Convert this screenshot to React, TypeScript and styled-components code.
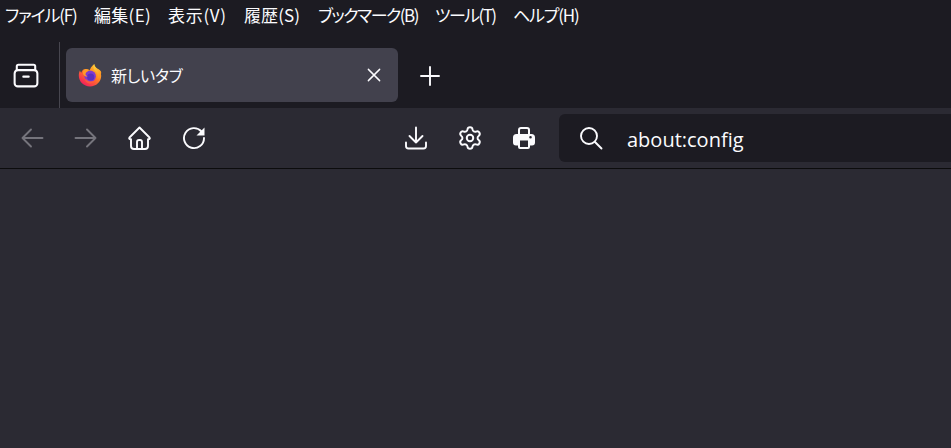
import React from 'react';
import styled, { createGlobalStyle } from 'styled-components';
import { Settings } from 'lucide-react';

const GlobalStyle = createGlobalStyle`
  html, body {
    margin: 0;
    height: 100%;
    background: #2b2a33;
  }
  #root {
    height: 100%;
  }
`;

const Window = styled.div`
  width: 951px;
  height: 448px;
  overflow: hidden;
  display: flex;
  flex-direction: column;
  background: #2b2a33;
  color: #fbfbfe;
  font-family: "Noto Sans CJK JP", "Noto Sans", sans-serif;
`;

const MenuBar = styled.div`
  height: 32px;
  flex: none;
  display: flex;
  align-items: center;
  box-sizing: border-box;
  background: #1c1b22;
  padding: 0 0 2px 5px;
  gap: 18px;
`;

const MenuItem = styled.span<{ $width: number; $spacing: number }>`
  width: ${({ $width }) => $width}px;
  flex: none;
  font-size: 17px;
  line-height: 30px;
  font-feature-settings: "palt";
  letter-spacing: ${({ $spacing }) => $spacing}px;
  white-space: nowrap;
  color: #fbfbfe;
`;

const TabBar = styled.div`
  height: 76px;
  flex: none;
  display: flex;
  align-items: center;
  background: #1c1b22;
`;

const TabSlot = styled.div`
  width: 60px;
  height: 66px;
  margin-top: 10px;
  flex: none;
  display: flex;
  align-items: center;
  padding-left: 13px;
  box-sizing: border-box;
  border-right: 1px solid #47464f;
`;

const Tab = styled.div`
  width: 332px;
  height: 54px;
  margin-left: 6px;
  margin-top: 9px;
  flex: none;
  display: flex;
  align-items: center;
  box-sizing: border-box;
  padding: 0 15px 0 12px;
  background: #42414d;
  border-radius: 6px;
`;

const TabTitle = styled.span`
  flex: 1;
  margin-left: 9px;
  font-size: 16px;
  font-feature-settings: "palt";
  letter-spacing: -0.2px;
  white-space: nowrap;
  color: #fbfbfe;
`;

const NewTab = styled.div`
  margin-left: 20px;
  margin-top: 12px;
  display: flex;
`;

const NavBar = styled.div`
  height: 61px;
  flex: none;
  display: flex;
  align-items: center;
  box-sizing: border-box;
  padding-left: 20px;
  background: #2b2a33;
  border-bottom: 1px solid #0c0c0d;
`;

const NavGroup = styled.div<{ $width: number }>`
  width: ${({ $width }) => $width}px;
  flex: none;
  display: flex;
  align-items: center;
  gap: 30px;
`;

const ToolIcon = styled.svg<{ $dim?: boolean }>`
  width: 24px;
  height: 24px;
  flex: none;
  fill: none;
  stroke: ${({ $dim }) => ($dim ? '#75747c' : '#fbfbfe')};
  stroke-width: 1.9;
  stroke-linecap: round;
  stroke-linejoin: round;
`;

const SlotIcon = styled(ToolIcon)`
  width: 26px;
  height: 26px;
`;

const CloseIcon = styled(ToolIcon)`
  width: 18px;
  height: 18px;
`;

const PrintIcon = styled(ToolIcon)`
  stroke: none;
  fill: #fbfbfe;
`;

const GearIcon = styled(Settings)`
  width: 26px;
  height: 26px;
  margin: 0 -1px;
  flex: none;
  color: #fbfbfe;
`;

const UrlBar = styled.div`
  flex: 1;
  height: 48px;
  margin-left: 23px;
  display: flex;
  align-items: center;
  background: #1c1b22;
  border-radius: 6px 0 0 6px;
  padding-left: 20px;
`;

const UrlText = styled.span`
  margin-left: 24px;
  margin-top: 2px;
  font-family: "Open Sans", "Noto Sans", sans-serif;
  font-size: 20px;
  color: #fbfbfe;
`;

const Content = styled.div`
  flex: 1;
  background: #2b2a33;
`;

const menus = [
  { label: 'ファイル(F)', width: 71, spacing: -1.15 },
  { label: '編集(E)', width: 56, spacing: 0.3 },
  { label: '表示(V)', width: 58, spacing: 0.7 },
  { label: '履歴(S)', width: 56, spacing: 0.1 },
  { label: 'ブックマーク(B)', width: 99, spacing: -1.5 },
  { label: 'ツール(T)', width: 60, spacing: -1.6 },
  { label: 'ヘルプ(H)', width: 66, spacing: -1.2 },
];

const FirefoxLogo = () => (
  <svg width="24" height="24" viewBox="0 0 24 24">
    <defs>
      <linearGradient id="fxBody" x1="0.8" y1="0.1" x2="0.2" y2="0.95">
        <stop offset="0" stopColor="#ffc02e" />
        <stop offset="0.45" stopColor="#ff7a24" />
        <stop offset="1" stopColor="#f3195f" />
      </linearGradient>
      <linearGradient id="fxFlame" x1="0.2" y1="0" x2="0.8" y2="1">
        <stop offset="0" stopColor="#ffd43d" />
        <stop offset="1" stopColor="#ff8a1e" />
      </linearGradient>
    </defs>
    <path
      d="M16.2 1c.2 2.2 1.3 3.4 3.2 4.8 2.4 1.8 3.8 4 3.8 7C23.2 18.8 18.2 23.5 12 23.5S.8 18.7.8 12.6c0-1.8.4-3.7 1.2-5 .2 1 .6 1.7 1.2 2.2.5-1.7 1.5-2.9 2.7-3.6-.1 1 .2 1.5.9 2 1.5-.7 3.500-.3 5 .4C11.500 5.500 13.800 3.500 16.200 1z"
      fill="url(#fxBody)"
    />
    <path d="M16.2 1c-1 2.500-1 5.500 1.600 7.500 2 1.600 2.800 4.500 1.600 7.500 2.400-1.500 3.800-3.900 3.800-6.500-.2-1.500-1.300-2.800-3.800-3.700C17.500 4.400 16.400 3 16.200 1z" fill="url(#fxFlame)" />
    <circle cx="12.200" cy="13.300" r="5.700" fill="#7f3bd0" />
    <circle cx="12.700" cy="14" r="3.600" fill="#5a2fc0" />
    <path d="M6.200 6.200c1.900-.5 4.700-.1 6.500 1.400-2.700-.1-4.600 1.500-5.300 3.400.2 1.100 1.200 2 2.400 2.400-1.500.4-3.600-.3-4.600-2.200-.5-1.500-.2-3.500 1-5z" fill="#ff9a2a" />
    <path d="M8 16c1.600 2 4.300 2.900 7 2 1.500-.5 2.800-1.700 3.400-3-.4 3.200-3.200 5.500-6.400 5.500-2.400 0-4.300-1.600-5-3.600z" fill="#ff5a3c" opacity="0.85" />
  </svg>
);

const App: React.FC = () => {
  return (
    <Window>
      <GlobalStyle />
      <MenuBar>
        {menus.map((m) => (
          <MenuItem key={m.label} $width={m.width} $spacing={m.spacing}>{m.label}</MenuItem>
        ))}
      </MenuBar>

      <TabBar>
        <TabSlot>
          <SlotIcon viewBox="0 0 24 24">
            <rect x="1.500" y="7.500" width="21" height="15" rx="3" />
            <path d="M5 2.500h14a1.500 1.500 0 0 1 1.500 1.500v3.500M5 2.500A1.500 1.500 0 0 0 3.500 4v3.500" />
            <path d="M9.500 13.500h5" />
          </SlotIcon>
        </TabSlot>
        <Tab>
          <FirefoxLogo />
          <TabTitle>新しいタブ</TabTitle>
          <CloseIcon viewBox="0 0 24 24">
            <path d="M4.500 4.500l15 15M19.500 4.500l-15 15" />
          </CloseIcon>
        </Tab>
        <NewTab>
          <ToolIcon viewBox="0 0 24 24">
            <path d="M12 3v18M3 12h18" />
          </ToolIcon>
        </NewTab>
      </TabBar>

      <NavBar>
        <NavGroup $width={384}>
          <ToolIcon $dim viewBox="0 0 24 24">
            <path d="M22.500 12H2.500M11 3.500L2.500 12l8.500 8.500" />
          </ToolIcon>
          <ToolIcon $dim viewBox="0 0 24 24">
            <path d="M1.500 12h20M13 3.500l8.500 8.500-8.500 8.500" />
          </ToolIcon>
          <ToolIcon viewBox="0 0 24 24">
            <path d="M11.500 1.500L1.500 11.500c-.8 1 .1 2 1.500 1.700v6.800a3 3 0 0 0 3 3h11a3 3 0 0 0 3-3v-6.800c1.400.3 2.300-.7 1.500-1.700z" />
            <path d="M9 23v-7a2 2 0 0 1 2-2h1a2 2 0 0 1 2 2v7" />
          </ToolIcon>
          <ToolIcon viewBox="0 0 24 24">
            <path d="M19.500 5.500A10 10 0 1 0 22 12" />
            <path d="M22.500 1.500v8h-8z" fill="#fbfbfe" stroke="none" />
          </ToolIcon>
        </NavGroup>
        <NavGroup $width={132}>
          <ToolIcon viewBox="0 0 24 24">
            <path d="M12 1.500v15M5.500 10l6.500 6.500 6.500-6.500" />
            <path d="M2 16.500v3.500a2.500 2.500 0 0 0 2.500 2.500h15a2.500 2.500 0 0 0 2.500-2.500v-3.500" />
          </ToolIcon>
          <GearIcon strokeWidth={1.8} />
          <PrintIcon viewBox="0 0 24 24">
            <path
              fillRule="evenodd"
              d="M6 8V4a3 3 0 0 1 3-3h6a3 3 0 0 1 3 3v4h1.500A3.500 3.500 0 0 1 23 11.500v5a3 3 0 0 1-3 3h-2v1.500a2 2 0 0 1-2 2H8a2 2 0 0 1-2-2v-1.500H4a3 3 0 0 1-3-3v-5A3.500 3.500 0 0 1 4.500 8zM8 8h8V4a1 1 0 0 0-1-1H9a1 1 0 0 0-1 1zM8 14.500V21h8v-6.500zM18.500 10a1.300 1.300 0 1 0 0 2.600 1.300 1.300 0 0 0 0-2.600z"
            />
          </PrintIcon>
        </NavGroup>
        <UrlBar>
          <ToolIcon viewBox="0 0 24 24">
            <circle cx="10" cy="10" r="8" />
            <path d="M16 16l6.500 6.500" />
          </ToolIcon>
          <UrlText>about:config</UrlText>
        </UrlBar>
      </NavBar>

      <Content />
    </Window>
  );
};

export default App;
